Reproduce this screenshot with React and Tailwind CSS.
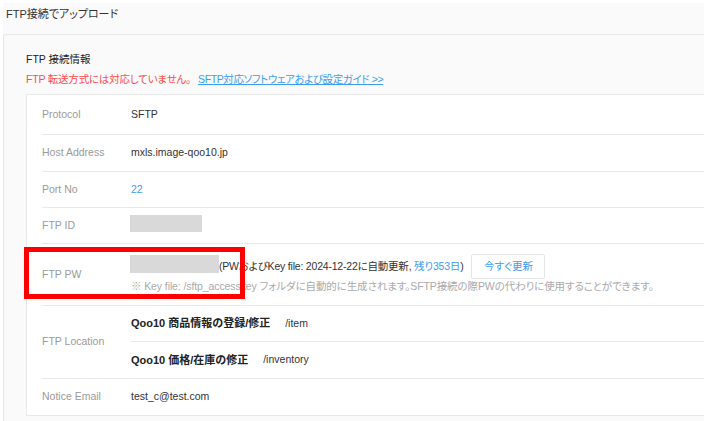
const font = "font-['Liberation_Sans','Noto_Sans_CJK_JP',sans-serif] [font-feature-settings:'palt']";

const Row = ({ label, h, children, last }) => (
  <div className={`ml-[15px] flex ${h} ${last ? '' : 'border-b border-[#e9e9e9]'}`}>
    <div className="w-[89px] shrink-0 flex items-center text-[10.5px] text-[#9a9a9a]">{label}</div>
    <div className="flex-1 flex items-center text-[10.5px] text-[#333]">{children}</div>
  </div>
);

const Mask = ({ w, h }) => <span className={`inline-block bg-[#d9d9d9] ${w} ${h}`} />;

export default function App() {
  return (
    <div className={`w-[704px] h-[421px] overflow-hidden bg-white pt-[3px] pl-[3px] ${font}`}>
      <div className="bg-[#fafafa] h-full relative">
        <div className="h-[31px] pt-[4px] pl-[3px] text-[11px] leading-[14px] text-[#333]">FTP接続でアップロード</div>
        <div className="w-[760px] border-t border-l border-[#e8e8e8] rounded-tl-[3px] h-[400px] pl-[22px]">
          <div className="pt-[17px] pb-[8px]">
            <div className="text-[10.5px] text-[#222] leading-[14px]">FTP 接続情報</div>
            <div className="mt-[6px] text-[10.5px] leading-[14px] tracking-[-0.2px]">
              <span className="text-[#ff4d4d]">FTP 転送方式には対応していません。</span>
              <span className="ml-[7px] text-[#3d9df0] underline tracking-[-0.4px]">SFTP対応ソフトウェアおよび設定ガイド &gt;&gt;</span>
            </div>
          </div>
          <div className="bg-white border border-[#e8e8e8] border-r-0">
            <Row label="Protocol" h="h-[40px]">SFTP</Row>
            <Row label="Host Address" h="h-[37px]">mxls.image-qoo10.jp</Row>
            <Row label="Port No" h="h-[36px]"><span className="text-[#3d9df0]">22</span></Row>
            <Row label="FTP ID" h="h-[36px]">
              <span className="-ml-[1px] mt-[1px]"><Mask w="w-[72px]" h="h-[17px]" /></span>
            </Row>
            <Row label="FTP PW" h="h-[62px]">
              <div className="flex flex-col">
                <div className="flex items-center">
                  <span className="-ml-[1px]"><Mask w="w-[89px]" h="h-[18px]" /></span>
                  <span className="tracking-[-0.2px]">(PWおよびKey file: 2024-12-22に自動更新, <span className="text-[#3d9df0]">残り353日</span>)</span>
                  <button className="ml-[8px] w-[74px] h-[25px] border border-[#e5e5e5] rounded-[2px] bg-white text-[10.5px] text-[#3d9df0]">今すぐ更新</button>
                </div>
                <div className="text-[10.5px] text-[#aaa] tracking-[-0.1px]">※ Key file: /sftp_accesskey フォルダに自動的に生成されます。SFTP接続の際PWの代わりに使用することができます。</div>
              </div>
            </Row>
            <Row label="FTP Location" h="h-[73px]">
              <div className="flex flex-col w-full h-full">
                <div className="h-[36px] flex items-center border-b border-[#e9e9e9]">
                  <span className="font-bold text-[11px] text-[#222]">Qoo10 商品情報の登録/修正</span>
                  <span className="ml-[15px]">/item</span>
                </div>
                <div className="flex-1 flex items-center">
                  <span className="font-bold text-[11px] text-[#222]">Qoo10 価格/在庫の修正</span>
                  <span className="ml-[15px]">/inventory</span>
                </div>
              </div>
            </Row>
            <Row label="Notice Email" h="h-[36px]" last>test_c@test.com</Row>
          </div>
        </div>
        <div className="absolute left-[21px] top-[244px] w-[221px] h-[52px] border-[5px] border-[#ff0000]" />
      </div>
    </div>
  );
}
